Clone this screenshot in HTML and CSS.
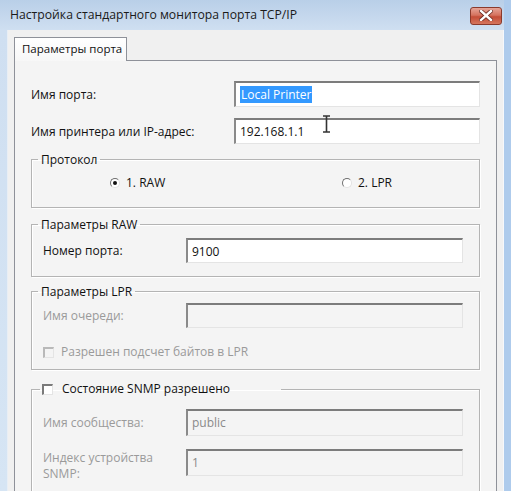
FILE: index.html
```html
<!DOCTYPE html>
<html lang="ru">
  <head>
    <meta charset="UTF-8" />
    <meta name="viewport" content="width=device-width, initial-scale=1.0" />
    <title>Настройка стандартного монитора порта TCP/IP</title>
    <link rel="stylesheet" href="styles.css">
  </head>
  <body>
    <div class="window">
      <div class="titlebar">
        <span class="title">Настройка стандартного монитора порта TCP/IP</span>
        <span class="close">
          <svg width="14" height="11" viewBox="0 0 14 11">
            <path d="M2 1 L12 10 M12 1 L2 10" stroke="#6b2a20" stroke-width="4" stroke-linecap="square" />
            <path d="M2 1 L12 10 M12 1 L2 10" stroke="#ffffff" stroke-width="2.4" stroke-linecap="square" />
          </svg>
        </span>
      </div>

      <div class="client">
        <div class="tabs">
          <div class="tab">Параметры порта</div>
        </div>

        <div class="panel">
          <div class="row">
            <span class="label">Имя порта:</span>
            <div class="field"><span class="selected">Local Printer</span></div>
          </div>
          <div class="row row-ip">
            <span class="label">Имя принтера или IP-адрес:</span>
            <div class="field">192.168.1.1</div>
            <svg class="ibeam" width="9" height="18" viewBox="0 0 9 18">
              <path d="M1 1 H8 M1 17 H8 M4.5 1 V17" stroke="#333" stroke-width="1.6" fill="none" />
            </svg>
          </div>

          <fieldset class="group group-proto">
            <legend>Протокол</legend>
            <div class="radios">
              <span class="radio-item radio-raw">
                <span class="radio checked"></span>1. RAW
              </span>
              <span class="radio-item">
                <span class="radio"></span>2. LPR
              </span>
            </div>
          </fieldset>

          <fieldset class="group group-raw">
            <legend>Параметры RAW</legend>
            <div class="group-row">
              <span class="label-sm">Номер порта:</span>
              <div class="field">9100</div>
            </div>
          </fieldset>

          <fieldset class="group group-lpr">
            <legend>Параметры LPR</legend>
            <div class="group-row">
              <span class="label-sm disabled">Имя очереди:</span>
              <div class="field field-off"></div>
            </div>
            <div class="check-row disabled">
              <span class="checkbox checkbox-off"></span>Разрешен подсчет байтов в LPR
            </div>
          </fieldset>

          <fieldset class="group group-snmp">
            <legend class="legend-check">
              <span class="checkbox"></span>Состояние SNMP разрешено
            </legend>
            <div class="group-row">
              <span class="label-sm disabled">Имя сообщества:</span>
              <div class="field field-off">public</div>
            </div>
            <div class="group-row group-row-index">
              <span class="label-sm disabled">Индекс устройства<br>SNMP:</span>
              <div class="field field-off">1</div>
            </div>
          </fieldset>
        </div>
      </div>
    </div>
  </body>
</html>
```

FILE: styles.css
```css
:root {
  --frame-color: #c7d9ee;
  --client-bg: #f0f0f0;
  --panel-bg: #f4f4f4;
  --group-border: #b4b4b4;
  --text-color: #111111;
  --disabled-color: #9a9a9a;
  --selection: #3399ff;
}

* {
  box-sizing: border-box;
  margin: 0;
  padding: 0;
}

body {
  font-family: "Open Sans", "Noto Sans", sans-serif;
  font-size: 12px;
  color: var(--text-color);
  background-color: var(--frame-color);
}

.window {
  width: 511px;
  height: 491px;
  overflow: hidden;
  background: linear-gradient(to bottom, #b9cfe8 0px, #cfdff1 30px, #d6e5f4 100%);
  border-right: 7px solid #aecbec;
}

.titlebar {
  height: 30px;
  display: flex;
  align-items: center;
  justify-content: space-between;
  padding: 0 2px 2px 10px;
}

.title {
  font-size: 12.2px;
  color: #1a1a1a;
}

.close {
  width: 32px;
  height: 18px;
  margin-top: 3px;
  border: 1px solid #8a3a2c;
  border-radius: 3px;
  background: linear-gradient(to bottom, #e6a497 0%, #d5735f 45%, #c44d37 55%, #d5765e 100%);
  display: flex;
  align-items: center;
  justify-content: center;
}

.client {
  background-color: var(--client-bg);
  margin: 0 0 0 7px;
  height: 461px;
  padding: 7px 6px 0 6px;
  border-left: 1px solid #e8eef5;
  border-right: 1px solid #f6f8fb;
}

.tabs {
  height: 23px;
  display: flex;
}

.tab {
  width: 113px;
  height: 24px;
  padding: 3px 0 0 7px;
  background: linear-gradient(to bottom, #ffffff, #f7f7f7);
  border: 1px solid #8e9199;
  border-bottom: none;
  position: relative;
  z-index: 1;
  font-size: 11.5px;
}

.panel {
  background-color: var(--panel-bg);
  border: 1px solid #8e9199;
  height: 460px;
  padding: 20px 16px 0 16px;
}

.row {
  display: flex;
  align-items: center;
  height: 26px;
}

.row-ip {
  margin-top: 11px;
  position: relative;
}

.label {
  width: 203px;
}

.field {
  flex: 1;
  height: 26px;
  background-color: #ffffff;
  border-top: 2px solid #7c7c7c;
  border-left: 2px solid #8a8a8a;
  border-right: 1px solid #e4e4e4;
  border-bottom: 1px solid #e4e4e4;
  padding: 3px 0 0 4px;
  line-height: 17px;
}

.selected {
  background-color: var(--selection);
  color: #ffffff;
  padding: 0 1px;
}

.ibeam {
  position: absolute;
  left: 291px;
  top: -3px;
}

.group {
  border: 1px solid var(--group-border);
  box-shadow: inset 1px 1px 0 #ffffff, 1px 1px 0 #ffffff;
  padding: 0 16px 0 11px;
  min-width: 0;
}

.group legend {
  margin-left: -5px;
  padding: 0 3px;
  line-height: 15px;
}

.group-proto {
  margin-top: 8px;
  padding-bottom: 16px;
}

.radios {
  display: flex;
  padding: 8px 0 0 67px;
  line-height: 16px;
}

.radio-item {
  display: flex;
  align-items: center;
  gap: 6px;
}

.radio-raw {
  width: 232px;
}

.radio {
  width: 10px;
  height: 10px;
  border-radius: 50%;
  background-color: #ffffff;
  border: 1px solid;
  border-color: #6f6f6f #e2e2e2 #e2e2e2 #6f6f6f;
  position: relative;
}

.radio.checked::after {
  content: "";
  position: absolute;
  left: 2px;
  top: 2px;
  width: 4px;
  height: 4px;
  border-radius: 50%;
  background-color: #111111;
}

.group-raw {
  margin-top: 9px;
  padding-bottom: 13px;
}

.group-row {
  display: flex;
  align-items: center;
  padding-top: 6px;
}

.group-row .field {
  height: 25px;
}

.label-sm {
  width: 143px;
}

.disabled {
  color: var(--disabled-color);
}

.field-off {
  background-color: var(--panel-bg);
  color: #8a8a8a;
}

.group-lpr {
  margin-top: 7px;
  padding-bottom: 9px;
}

.group-lpr .group-row {
  padding-top: 4px;
}

.check-row {
  display: flex;
  align-items: center;
  gap: 7px;
  margin-top: 16px;
  line-height: 16px;
}

.checkbox {
  width: 11px;
  height: 11px;
  background-color: #ffffff;
  border-top: 2px solid #7a7a7a;
  border-left: 2px solid #7a7a7a;
  border-right: 1px solid #e4e4e4;
  border-bottom: 1px solid #e4e4e4;
}

.checkbox-off {
  background-color: var(--panel-bg);
  border-top-color: #b9b9b9;
  border-left-color: #b9b9b9;
}

.group-snmp {
  margin-top: 11px;
  padding-bottom: 30px;
}

.group legend.legend-check {
  display: flex;
  align-items: center;
  gap: 9px;
  width: 241px;
  margin-left: -3px;
  padding: 0 0 0 2px;
  line-height: 16px;
}

.group-snmp .group-row {
  padding-top: 12px;
}

.group-snmp .group-row .field {
  height: 27px;
}

.group-row-index {
  align-items: flex-start;
}

.group-snmp .group-row-index {
  padding-top: 13px;
}

.group-row-index .label-sm {
  line-height: 16px;
  margin-top: 1px;
}
```
